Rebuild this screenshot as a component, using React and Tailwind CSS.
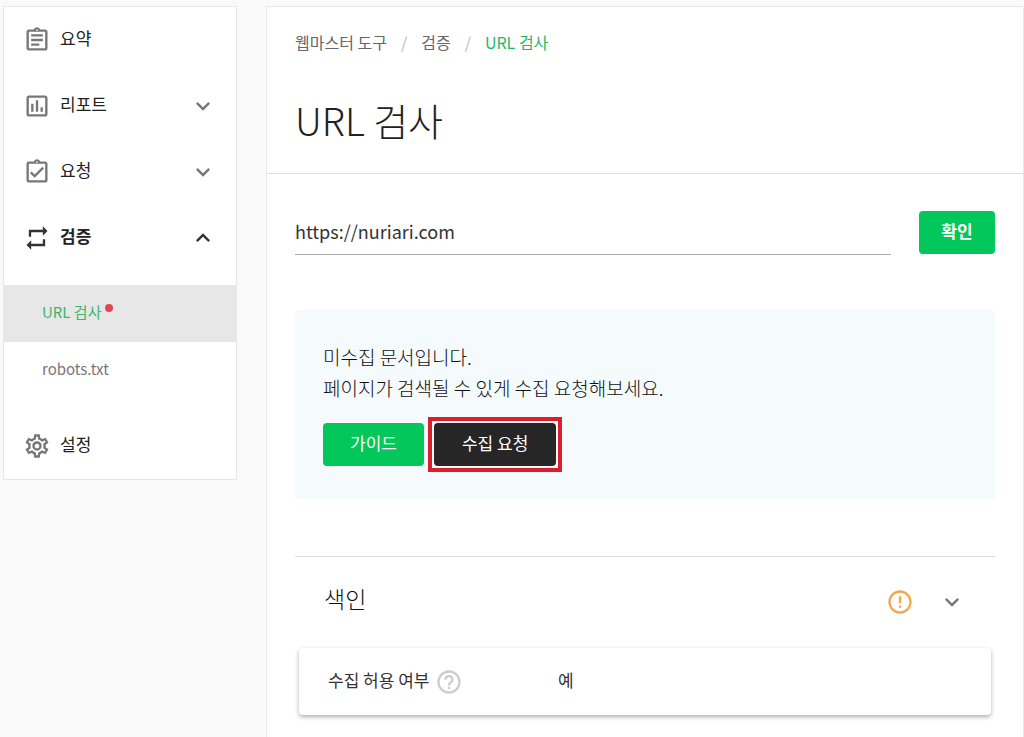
import { useState } from 'react';
import {
  MdOutlineAssignment,
  MdOutlineAssessment,
  MdOutlineAssignmentTurnedIn,
  MdRepeat,
  MdOutlineSettings,
  MdExpandMore,
  MdExpandLess,
  MdErrorOutline,
  MdHelpOutline,
} from 'react-icons/md';

const SidebarItem = ({ icon: Icon, label, expandable, open }) => (
  <button
    type="button"
    aria-expanded={expandable ? Boolean(open) : undefined}
    className="flex h-[66px] w-full items-center px-[19px] text-left"
  >
    <Icon className={`size-7 shrink-0 ${open ? 'text-[#333]' : 'text-[#777]'}`} />
    <span className={`ml-[9px] flex-1 pb-1 text-[17px] leading-6 text-[#222] ${open ? 'font-bold' : 'font-normal'}`}>
      {label}
    </span>
    {expandable && (open
      ? <MdExpandLess className="size-7 text-[#333]" />
      : <MdExpandMore className="size-7 text-[#777]" />)}
  </button>
);

const Sidebar = () => (
  <nav className="w-[234px] shrink-0 self-start border border-[#e8e8e8] bg-white">
    <SidebarItem icon={MdOutlineAssignment} label="요약" />
    <SidebarItem icon={MdOutlineAssessment} label="리포트" expandable />
    <SidebarItem icon={MdOutlineAssignmentTurnedIn} label="요청" expandable />
    <SidebarItem icon={MdRepeat} label="검증" expandable open />

    <ul className="my-[14px] text-[15px] leading-6">
      <li>
        <a href="#url" className="flex h-[57px] items-center bg-[#e7e7e7] pb-1 pl-[38px] text-[#3cb46e]">
          URL 검사
          <span className="mb-2 ml-1 size-2 rounded-full bg-[#e2474f]" />
        </a>
      </li>
      <li>
        <a href="#robots" className="flex h-[57px] items-center pb-1 pl-[38px] text-[#777]">
          robots.txt
        </a>
      </li>
    </ul>

    <SidebarItem icon={MdOutlineSettings} label="설정" />
  </nav>
);

const Breadcrumb = () => (
  <div className="flex items-center gap-[14px] text-base leading-6 text-[#666]">
    <a href="#tools">웹마스터 도구</a>
    <span className="text-[#bbb]">/</span>
    <a href="#verify">검증</a>
    <span className="text-[#bbb]">/</span>
    <a href="#url" className="text-[#1fb866]">URL 검사</a>
  </div>
);

const App = () => {
  const [url, setUrl] = useState('https://nuriari.com');

  return (
    <div className="flex min-h-screen gap-[29px] bg-[#fafafa] pt-[6px] pl-[3px] font-['Noto_Sans_CJK_KR',sans-serif]">
      <Sidebar />

      <main className="min-w-0 flex-1 border border-b-0 border-[#e8e8e8] bg-white">
        <header className="border-b border-[#ddd] px-7 pt-[23px] pb-7">
          <Breadcrumb />
          <h1 className="mt-10 text-[38px] leading-[51px] font-light text-[#222]">URL 검사</h1>
        </header>

        <div className="px-7 pt-[37px]">
          {/* URL form */}
          <form className="flex gap-7" onSubmit={(e) => e.preventDefault()}>
            <input
              type="text"
              aria-label="URL"
              value={url}
              onChange={(e) => setUrl(e.target.value)}
              className="h-11 min-w-0 flex-1 border-b border-[#aaa] pb-1 text-lg text-[#333] outline-none"
            />
            <button type="submit" className="h-[43px] w-[76px] rounded bg-[#03c75a] pb-1 text-[17px] font-bold text-white">
              확인
            </button>
          </form>

          {/* Result message */}
          <section className="mt-[55px] rounded bg-[#f5fafd] px-7 pt-[31px] pb-[33px]">
            <p className="text-[19px] leading-[31px] font-light text-[#111]">
              미수집 문서입니다.
              <br />
              페이지가 검색될 수 있게 수집 요청해보세요.
            </p>
            <div className="mt-[14px] -mb-[6px] flex items-center gap-1 text-[17px] text-white">
              <button type="button" className="h-[43px] rounded bg-[#03c75a] px-[27px] pb-1">
                가이드
              </button>
              <div className="border-4 border-[#d91f2e] p-[2px]">
                <button type="button" className="block h-[43px] rounded bg-[#262626] px-7 pb-1">
                  수집 요청
                </button>
              </div>
            </div>
          </section>

          {/* Index status */}
          <section className="mt-[57px] border-t border-[#ddd]">
            <div className="flex h-[89px] items-center px-[29px]">
              <h2 className="flex-1 pb-2 text-[23px] leading-8 font-light text-[#111]">색인</h2>
              <MdErrorOutline className="size-7 text-[#f5a54a]" />
              <button type="button" aria-label="색인" className="ml-6">
                <MdExpandMore className="size-7 text-[#777]" />
              </button>
            </div>
            <dl className="mx-1 mt-[2px] flex h-[67px] items-center rounded bg-white px-[29px] text-[17px] leading-6 text-[#333] shadow-[0_2px_4px_rgba(0,0,0,0.32)]">
              <dt className="flex w-[230px] items-center gap-[6px]">
                <span className="pb-1">수집 허용 여부</span>
                <MdHelpOutline className="size-7 text-[#ccc]" />
              </dt>
              <dd className="pb-1">예</dd>
            </dl>
          </section>
        </div>
      </main>
    </div>
  );
};

export default App;
